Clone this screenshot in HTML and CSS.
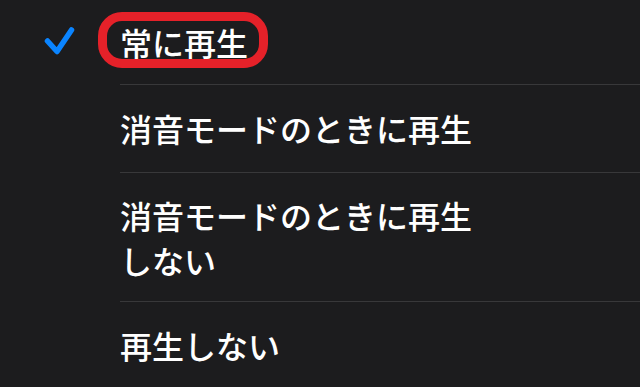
FILE: index.html
```html
<!DOCTYPE html>
<html lang="ja">
<head>
<meta charset="utf-8">
<link rel="stylesheet" href="styles.css">
</head>
<body>
<ul class="list">
  <li class="row first">
    <div class="mark">
      <svg class="check" width="40" height="40" viewBox="0 0 40 40"><path d="M7.5 19 L17 29.5 L31.5 8" fill="none" stroke="#0a84ff" stroke-width="5.5" stroke-linecap="round" stroke-linejoin="round"/></svg>
    </div>
    <div class="label"><span class="highlight">常に再生</span></div>
  </li>
  <li class="row">
    <div class="mark"></div>
    <div class="label sep">消音モードのときに再生</div>
  </li>
  <li class="row">
    <div class="mark"></div>
    <div class="label sep multi">消音モードのときに再生<br>しない</div>
  </li>
  <li class="row">
    <div class="mark"></div>
    <div class="label sep">再生しない</div>
  </li>
</ul>
</body>
</html>
```
FILE: styles.css
```css
html, body {
  margin: 0;
  padding: 0;
  background: #1c1c1e;
  overflow: hidden;
}
body {
  width: 640px;
  height: 387px;
  font-family: "Noto Sans CJK JP", "Noto Sans", sans-serif;
  color: #ffffff;
}
.list {
  list-style: none;
  margin: 0;
  padding: 0;
}
.row {
  display: flex;
  align-items: stretch;
}
.mark {
  width: 120px;
  flex: 0 0 120px;
  display: flex;
  align-items: center;
  justify-content: center;
}
.label {
  flex: 1;
  display: flex;
  align-items: center;
  min-height: 88px;
  font-size: 32px;
  font-weight: 500;
  line-height: 45px;
  box-sizing: border-box;
}
.first .label {
  min-height: 84px;
}
.sep {
  border-top: 1px solid #38383a;
}
.multi {
  display: block;
  padding: 20px 0 18px;
}
.highlight {
  position: relative;
  display: inline-block;
}
.highlight::before {
  content: "";
  position: absolute;
  top: -8px;
  bottom: -3px;
  left: -22px;
  right: -20px;
  border: 9px solid #e52129;
  border-radius: 24px;
}
```
